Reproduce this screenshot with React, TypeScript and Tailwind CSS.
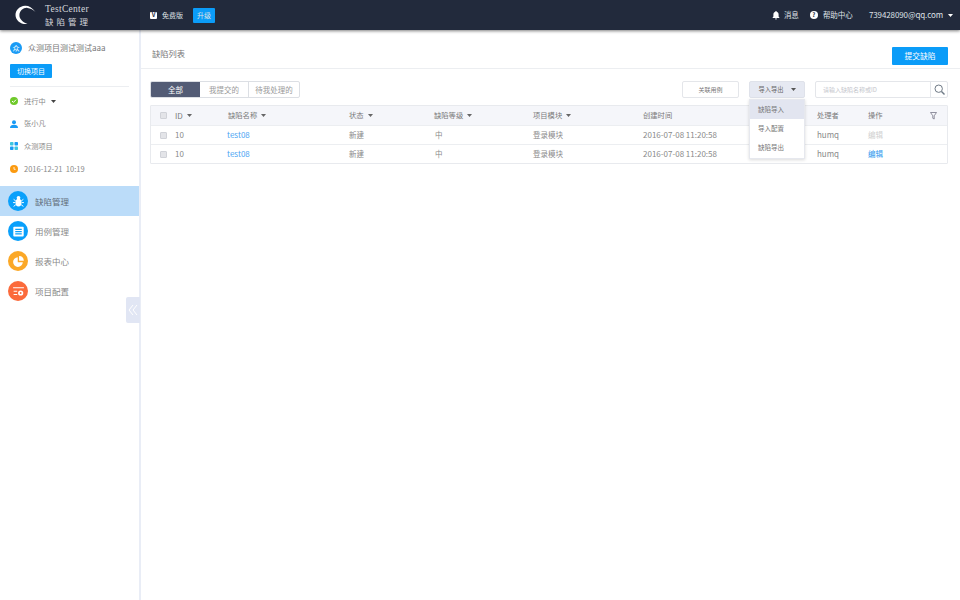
import React from "react";

const font = { fontFamily: '"Noto Sans CJK SC", "Noto Sans", sans-serif' };

function Caret({ className = "" }: { className?: string }) {
  return (
    <svg width="5" height="3" viewBox="0 0 5 3" className={className}>
      <path d="M0 0h5L2.500 3z" fill="currentColor" />
    </svg>
  );
}

function Logo() {
  return (
    <svg width="24" height="22" viewBox="0 0 24 22" className="shrink-0">
      <path
        d="M21.500 8C18 3.300 14.500 1.500 11 1.700C5.500 2 1.500 6 1.500 11C1.500 16.500 7 20.800 13.500 20C9 18.500 5 15 5.400 10.800C5.800 6.800 9.500 3.400 13.500 3.900C16.500 4.300 19.300 5.800 21.500 8Z"
        fill="#fff"
      />
    </svg>
  );
}

function NavIcon({ color, children }: { color: string; children: React.ReactNode }) {
  return (
    <span
      className="w-5 h-5 rounded-full flex items-center justify-center shrink-0"
      style={{ backgroundColor: color }}
    >
      <svg width="13" height="13" viewBox="0 0 12 12" fill="#fff">
        {children}
      </svg>
    </span>
  );
}

const navItems = [
  {
    label: "缺陷管理",
    color: "#0aa0fb",
    active: true,
    icon: (
      <>
        <circle cx="6" cy="2.600" r="1.700" />
        <ellipse cx="6" cy="7" rx="2.800" ry="3.600" />
        <path d="M1.500 4l2 1.500M10.500 4l-2 1.500M1 7h2M11 7H9M1.500 10.500L3.500 9M10.500 10.500L8.500 9" stroke="#fff" strokeWidth="0.900" fill="none" />
      </>
    ),
  },
  {
    label: "用例管理",
    color: "#0aa0fb",
    icon: (
      <path d="M2 1.500h8a.8.8 0 0 1 .8.8v7.400a.8.8 0 0 1-.8.8H2a.8.8 0 0 1-.8-.8V2.300a.8.8 0 0 1 .8-.8zM3 3.500v1h6v-1zM3 5.600v1h6v-1zM3 7.700v1h6v-1z" fillRule="evenodd" />
    ),
  },
  {
    label: "报表中心",
    color: "#fba827",
    icon: (
      <>
        <path d="M5.300 2A4.500 4.500 0 1 0 10 6.700H5.300z" />
        <path d="M6.500 1v4.300h4.400A4.500 4.500 0 0 0 6.500 1z" />
      </>
    ),
  },
  {
    label: "项目配置",
    color: "#fb6a3b",
    icon: (
      <>
        <path d="M1 2h10v1.100H1zM1.500 5.200h3.300v1H1.500zM1.500 8.200h3.300v1H1.500z" />
        <circle cx="8" cy="7.400" r="2.400" />
        <circle cx="8" cy="7.400" r="0.900" fill="#fb6a3b" />
      </>
    ),
  },
];

const cols = "grid grid-cols-[24px_53px_121px_85px_99px_110px_174px_51px_50px_1fr] items-center";

function Check() {
  return <span className="w-[7px] h-[7px] rounded-[1px] bg-[#e3e4e8] border border-[#d0d2d8] ml-[9px] block" />;
}

function Head({ children, caret }: { children: React.ReactNode; caret?: boolean }) {
  return (
    <div className="flex items-center gap-[4px]">
      <span>{children}</span>
      {caret && <Caret className="text-[#666]" />}
    </div>
  );
}

function Row({ enabled }: { enabled: boolean }) {
  return (
    <div className={`${cols} h-[19px] border-t border-[#eceef1] text-[7.500px] text-[#8a8a8a]`}>
      <Check />
      <span className="text-[8px]">10</span>
      <span className="text-[#4ba5f3] text-[8px] -ml-[1px]">test08</span>
      <span>新建</span>
      <span className="pl-[1px]">中</span>
      <span>登录模块</span>
      <span className="text-[8px]">2016-07-08 11:20:58</span>
      <span className="text-[8px]">humq</span>
      <span className={enabled ? "text-[#2a97ee]" : "text-[#d0d0d0]"}>编辑</span>
    </div>
  );
}

export default function App() {
  return (
    <div className="w-[960px] h-[600px] overflow-hidden bg-white flex flex-col relative" style={font}>
      <header className="h-[30px] bg-[#222a3c] flex items-center shrink-0 shadow-[0_1px_3px_rgba(0,0,0,0.5)] relative z-10 text-white">
        <div className="w-[140px] h-full bg-[#1e2537] flex items-center pl-[14px] gap-[7px]">
          <Logo />
          <div className="flex flex-col leading-none">
            <span className="text-[9.500px] tracking-[0.300px] text-[#d5d7dc] mb-[2px]" style={{ fontFamily: '"Liberation Serif", serif' }}>TestCenter</span>
            <span className="text-[8.500px] tracking-[3px] text-[#d5d7dc]">缺陷管理</span>
          </div>
        </div>
        <div className="flex items-center pl-[10px] text-[7px] text-[#dfe1e6]">
          <span className="w-[7px] h-[7px] bg-white rounded-[1px] text-[#222a3c] text-[6px] font-bold flex items-center justify-center leading-none">V</span>
          <span className="ml-[5px]">免费版</span>
          <span className="ml-[10px] w-[22px] h-[15px] bg-[#0b9cf8] rounded-[1px] flex items-center justify-center">升级</span>
        </div>
        <div className="ml-auto flex items-center pr-[7px] text-[7.500px] text-[#dfe1e6]">
          <svg width="8" height="9" viewBox="0 0 8 9" fill="#fff"><path d="M4 0a.7.7 0 0 1 .7.7C6 1 6.600 2.200 6.600 3.500V5.500L7.600 7H.4L1.400 5.500V3.500C1.400 2.200 2 1 3.300.7A.7.7 0 0 1 4 0zM3 7.600h2A1 1 0 0 1 3 7.600z" /></svg>
          <span className="ml-[4px]">消息</span>
          <span className="ml-[11px] w-[8px] h-[8px] rounded-full bg-white text-[#222a3c] text-[6px] font-bold flex items-center justify-center leading-none">?</span>
          <span className="ml-[5px]">帮助中心</span>
          <span className="ml-[16px] text-[8px] tracking-[-0.100px]">739428090@qq.com</span>
          <Caret className="ml-[5px] text-white" />
        </div>
      </header>

      <div className="flex-1 flex min-h-0 relative">
        <aside className="w-[141px] shrink-0 border-r-[2px] border-[#e9edf6] bg-white flex flex-col">
          <div className="pt-[12px] pl-[10px] flex items-center gap-[6px]">
            <span className="w-[12px] h-[12px] rounded-full bg-[#1a9bf5] text-white text-[7px] flex items-center justify-center leading-none">众</span>
            <span className="text-[8px] text-[#777] h-[12px] leading-[12px]">众测项目测试测试aaa</span>
          </div>
          <div className="pl-[10px] mt-[10px]">
            <span className="w-[42px] h-[14px] bg-[#0b9cf8] rounded-[1px] text-white text-[7px] flex items-center justify-center">切换项目</span>
          </div>
          <div className="mx-[10px] mt-[8px] border-t border-[#eceef1]" />
          <div className="flex flex-col text-[7.200px] text-[#888] pl-[10px] mt-[3px]">
            <div className="h-[22.500px] flex items-center">
              <span className="w-[8px] h-[8px] rounded-full bg-[#6fc92a] flex items-center justify-center">
                <svg width="6" height="6" viewBox="0 0 6 6"><path d="M1 3l1.400 1.400L5 1.700" stroke="#fff" strokeWidth="1" fill="none" /></svg>
              </span>
              <span className="ml-[6px]">进行中</span>
              <Caret className="ml-[5px] text-[#444]" />
            </div>
            <div className="h-[22.500px] flex items-center">
              <svg width="8" height="8" viewBox="0 0 8 8" fill="#1a9bf5"><circle cx="4" cy="2.300" r="2" /><path d="M0 8c0-2.300 1.500-3.200 4-3.200S8 5.700 8 8z" /></svg>
              <span className="ml-[6px]">张小凡</span>
            </div>
            <div className="h-[22.500px] flex items-center">
              <svg width="8" height="8" viewBox="0 0 8 8" fill="#3cc6e0"><rect x="0" y="0" width="3.500" height="3.500" rx=".8" /><rect x="4.500" y="0" width="3.500" height="3.500" rx=".8" fill="#1a9bf5" /><rect x="0" y="4.500" width="3.500" height="3.500" rx=".8" fill="#1a9bf5" /><rect x="4.500" y="4.500" width="3.500" height="3.500" rx=".8" /></svg>
              <span className="ml-[6px]">众测项目</span>
            </div>
            <div className="h-[22.500px] flex items-center">
              <svg width="8" height="8" viewBox="0 0 8 8"><circle cx="4" cy="4" r="4" fill="#fb9a10" /><path d="M4 2v2.300h1.600" stroke="#fff" strokeWidth=".8" fill="none" /></svg>
              <span className="ml-[6px] text-[7.500px]">2016-12-21&nbsp;&nbsp;10:19</span>
            </div>
          </div>
          <nav className="mt-[6px] flex flex-col">
            {navItems.map((n) => (
              <div key={n.label} className={`h-[30px] flex items-center pl-[8px] gap-[7px] text-[8.500px] ${n.active ? "bg-[#bbdcf9] text-[#5f6b77]" : "text-[#888]"}`}>
                <NavIcon color={n.color}>{n.icon}</NavIcon>
                <span>{n.label}</span>
              </div>
            ))}
          </nav>
        </aside>

        <div className="absolute left-[126px] top-[267px] w-[14px] h-[26px] bg-[#e1e6f4] rounded-l-[2px] flex items-center justify-center">
          <svg width="10" height="12" viewBox="0 0 10 12" fill="none" stroke="#fff" strokeWidth="1"><path d="M5 1L1 6l4 5M9 1L5 6l4 5" /></svg>
        </div>

        <main className="flex-1 min-w-0 flex flex-col">
          <div className="h-[39px] shrink-0 border-b border-[#eceef1] flex items-end pb-[3px] pl-[11px] pr-[12px]">
            <span className="text-[8.250px] text-[#777] pb-[6px]">缺陷列表</span>
            <span className="ml-auto w-[56px] h-[18px] bg-[#0b9cf8] rounded-[1px] text-white text-[7.750px] flex items-center justify-center">提交缺陷</span>
          </div>

          <div className="pl-[9px] pr-[12px] pt-[12px]">
            <div className="flex items-center h-[17px] text-[7.500px]">
              <div className="flex h-[17px] rounded-[2px] border border-[#dcdfe4] overflow-hidden text-[#999]">
                <span className="w-[49px] bg-[#535c75] text-white flex items-center justify-center">全部</span>
                <span className="w-[49px] flex items-center justify-center border-r border-[#dcdfe4]">我提交的</span>
                <span className="w-[50px] flex items-center justify-center">待我处理的</span>
              </div>
              <span className="ml-auto w-[57px] h-[17px] rounded-[2px] border border-[#e4e6ea] text-[6px] text-[#777] flex items-center justify-center">关联用例</span>
              <div className="relative ml-[10px]">
                <div className="w-[56px] h-[17px] rounded-[2px] bg-[#e6e9f2] border border-[#dfe2ea] text-[6.250px] text-[#666] flex items-center justify-center gap-[7px]">
                  <span>导入导出</span>
                  <Caret className="text-[#555]" />
                </div>
                <div className="absolute z-20 left-0 top-[18px] w-[56px] h-[60px] bg-white border border-[#e6e8ee] shadow-[0_1px_3px_rgba(0,0,0,0.15)] text-[6.500px] text-[#777] flex flex-col">
                  <span className="h-[20px] bg-[#e2e5f0] flex items-center pl-[8px]">缺陷导入</span>
                  <span className="h-[20px] flex items-center pl-[8px]">导入配置</span>
                  <span className="h-[20px] flex items-center pl-[8px]">缺陷导出</span>
                </div>
              </div>
              <div className="ml-[10px] flex h-[17px] w-[133px] rounded-[2px] border border-[#e4e6ea]">
                <span className="flex-1 text-[6px] text-[#c4c6cc] flex items-center pl-[7px]">请输入缺陷名称或ID</span>
                <span className="w-[17px] border-l border-[#e4e6ea] flex items-center justify-center">
                  <svg width="11" height="11" viewBox="0 0 11 11" fill="none" stroke="#6f7a86" strokeWidth="1"><circle cx="4.700" cy="4.700" r="3.700" /><path d="M7.500 7.500l3 3" strokeWidth="1.400" /></svg>
                </span>
              </div>
            </div>

            <div className="mt-[7px] border border-[#e8eaee] rounded-[1px] relative">
              <div className={`${cols} h-[19px] bg-[#f5f6fa] text-[7.300px] text-[#7a7a7a]`}>
                <Check />
                <Head caret><span className="text-[8px]">ID</span></Head>
                <Head caret>缺陷名称</Head>
                <Head caret>状态</Head>
                <Head caret>缺陷等级</Head>
                <Head caret>项目模块</Head>
                <Head>创建时间</Head>
                <Head>处理者</Head>
                <Head>操作</Head>
                <div className="flex justify-end pr-[10px]">
                  <svg width="7" height="8" viewBox="0 0 7 8" fill="none" stroke="#778" strokeWidth=".8"><path d="M.5.5h6L4.200 3.800V7L2.800 6.300V3.800z" /></svg>
                </div>
              </div>
              <Row enabled={false} />
              <Row enabled />
            </div>
          </div>
        </main>
      </div>
    </div>
  );
}
